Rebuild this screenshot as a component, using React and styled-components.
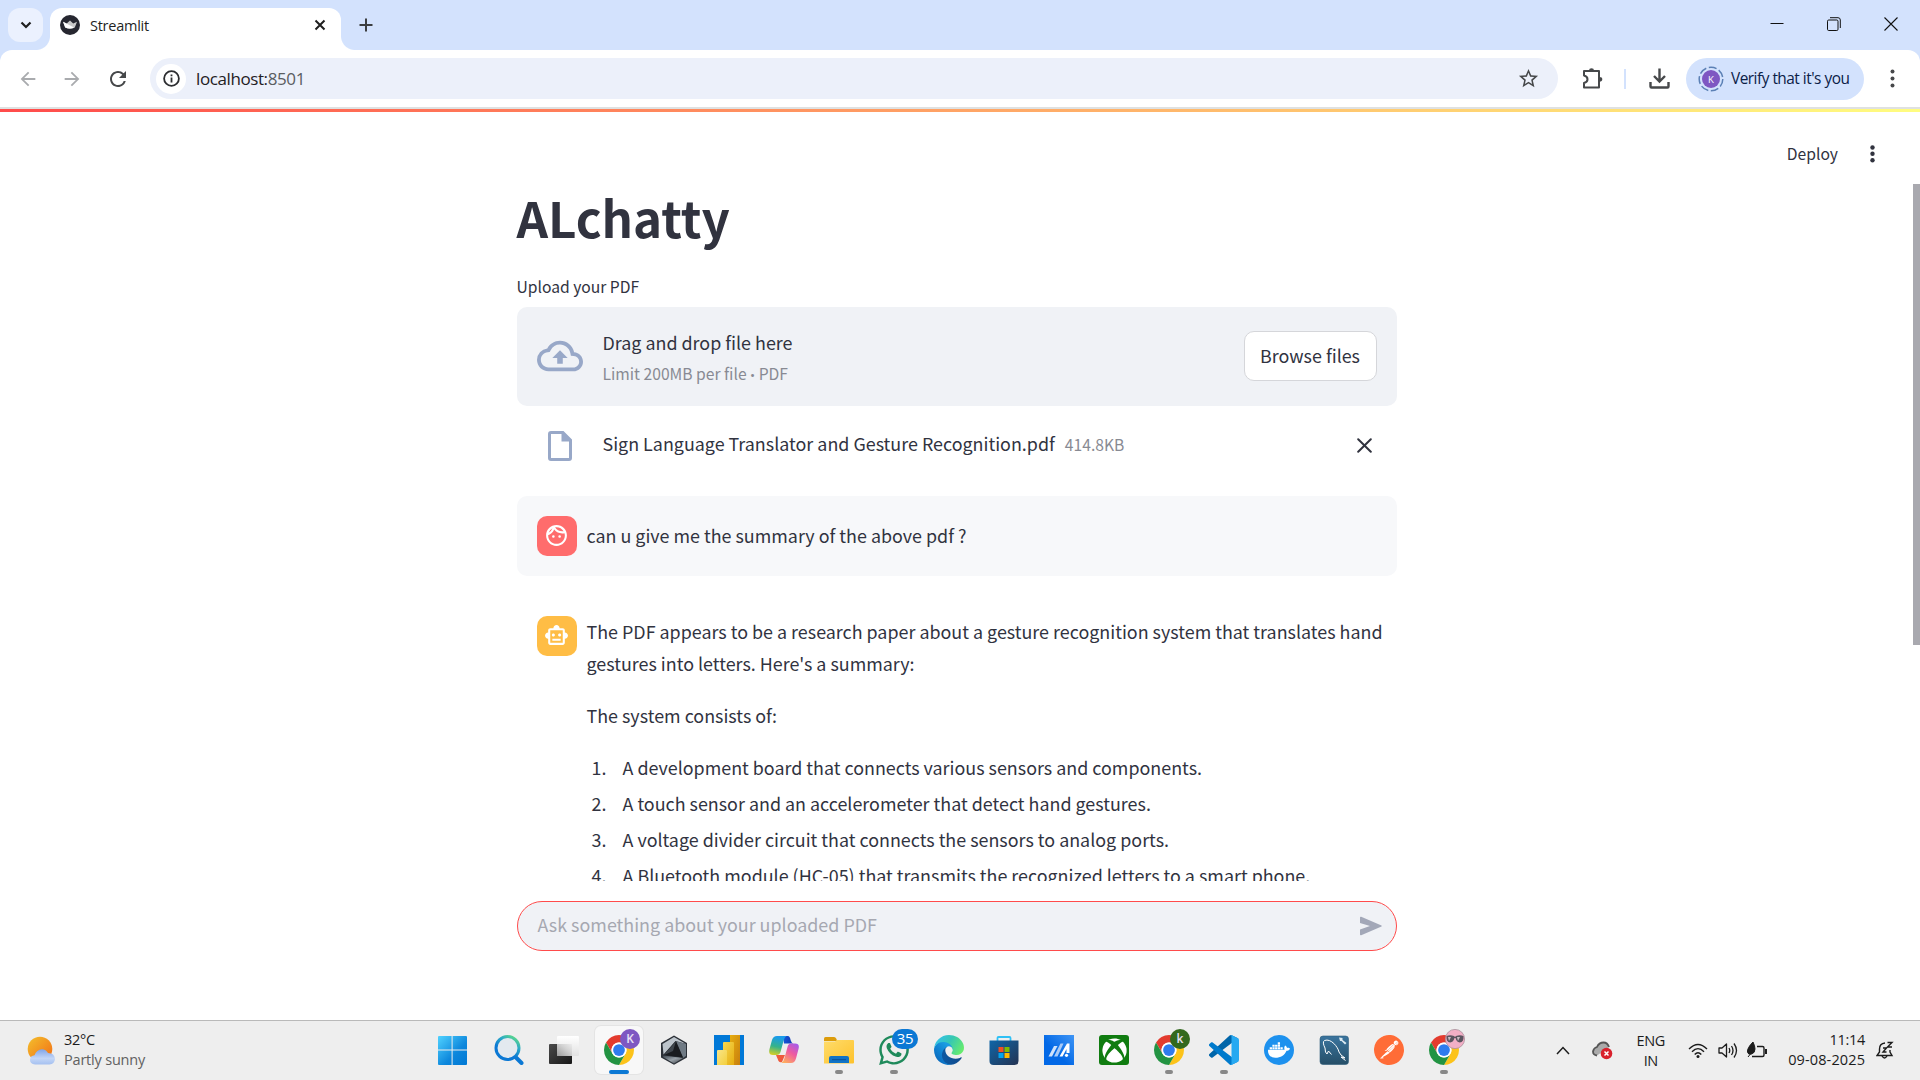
import React from "react";
import styled, { createGlobalStyle, css } from "styled-components";
import { MdArrowBack, MdArrowForward, MdRefresh, MdStarBorder, MdOutlineCloudUpload, MdOutlineFace, MdOutlineSmartToy } from "react-icons/md";
import { FaWhatsapp, FaXbox, FaDocker } from "react-icons/fa";
import { SiPostman } from "react-icons/si";

const Global = createGlobalStyle`
  *, *::before, *::after { box-sizing: border-box; }
  body { margin: 0; background: #fff; overflow: hidden; }
  svg { display: block; flex: none; }
  h1, p, ol { margin: 0; padding: 0; }
`;

const ui = css`font-family: "Open Sans", "Noto Sans", sans-serif; white-space: nowrap;`;
const source = css`font-family: "Noto Sans CJK SC", "Noto Sans", sans-serif; color: #31333f;`;

const Screen = styled.div`
  width: 1920px; height: 1080px; display: grid;
  grid-template-rows: 50px 59px 911px 60px; overflow: hidden; background: #fff;
`;

/* ---------- browser frame ---------- */
const TabStrip = styled.header`
  background: #d3e2fd; display: flex; align-items: flex-start; padding: 8px 0 0 8px;
`;
const TabSearch = styled.button`
  width: 35px; height: 34px; border: 0; padding: 0; border-radius: 12px; background: #ebf1fe;
  display: grid; place-items: center; margin-right: 7px;
`;
const Tab = styled.div`
  position: relative; width: 291px; height: 42px; background: #fff; border-radius: 12px 12px 0 0;
  display: flex; align-items: center; padding: 0 15px 8px 10px;
  &::before, &::after { content: ""; position: absolute; bottom: 0; width: 14px; height: 14px; }
  &::before { left: -14px; background: radial-gradient(circle at 0 0, transparent 13.5px, #fff 14.5px); }
  &::after { right: -14px; background: radial-gradient(circle at 100% 0, transparent 13.5px, #fff 14.5px); }
`;
const TabTitle = styled.span`
  ${ui} font-size: 14.5px; letter-spacing: -0.25px; color: #1f1f1f; margin-left: 10px; flex: 1; line-height: 20px; padding-top: 1px;
`;
const NewTab = styled.div`margin: 10px 0 0 18px;`;
const WindowButtons = styled.div`
  margin-left: auto; display: flex; padding: 9px 22px 0 0; gap: 43px; align-items: center;
`;
const Toolbar = styled.div`
  background: linear-gradient(#d3e2fd, #d3e2fd) top / 100% 12px no-repeat;
  display: flex; flex-direction: column;
`;
const ToolbarRow = styled.div`
  height: 57px; background: #fff; border-radius: 12px 12px 0 0; display: flex; align-items: center;
  padding: 0 18px 0 16.5px;
`;
const ToolbarEdge = styled.div`height: 2px; background: #dfe1e1;`;
const NavButtons = styled.div`display: flex; width: 133.5px; gap: 22.5px; color: #a9abae; align-items: center;`;
const Dark = styled.span`color: #46484a; display: block;`;
const Omnibox = styled.div`
  width: 1408px; height: 41px; border-radius: 21px; background: #ecf0fa; display: flex; align-items: center; padding: 0 18px 0 6px;
`;
const SiteInfo = styled.div`width: 30px; height: 30px; border-radius: 50%; background: #fff; display: grid; place-items: center;`;
const Url = styled.span`
  ${ui} font-size: 17px; letter-spacing: -0.4px; color: #1f2023; margin-left: 10px; flex: 1; line-height: 24px; padding-top: 1px;
  b { font-weight: 400; color: #5a5d61; }
`;
const ToolDivider = styled.div`width: 2px; height: 20px; background: #d3e2fd; margin: 0 23px 0 21px;`;
const Profile = styled.div`
  width: 178px; height: 42px; border-radius: 21px; background: #d3e2fd; display: flex; align-items: center; padding-left: 12px; margin: 0 26px 0 16px;
`;
const ProfileText = styled.span`${ui} font-size: 15.4px; letter-spacing: -0.5px; color: #0a2047; margin-left: 7px;`;

/* ---------- app ---------- */
const Viewport = styled.div`display: flex; flex-direction: column;`;
const Rainbow = styled.div`height: 3px; background: linear-gradient(90deg, #ff4b4b, #fffd80);`;
const AppHeader = styled.div`
  height: 72px; display: flex; justify-content: flex-end; align-items: center; padding: 12px 45px 0 0; gap: 32px;
`;
const Deploy = styled.span`${source} font-size: 15.67px; line-height: 28px; margin-top: -1px;`;
const ScrollRow = styled.div`height: 697px; display: flex; overflow: hidden;`;
const ScrollArea = styled.main`flex: 1; display: flex; justify-content: center;`;
const ScrollTrack = styled.div`width: 7px;`;
const ScrollThumb = styled.div`height: 461px; background: #a9a9af;`;
const Column = styled.div`width: 880px; flex: none;`;
const Title = styled.h1`${source} font-size: 49.25px; line-height: 66px; font-weight: 700; letter-spacing: -0.05px;`;
const Label = styled.div`${source} font-size: 15.67px; line-height: 28px; margin: 23px 0 6px;`;
const Dropzone = styled.section`
  height: 99px; border-radius: 10px; background: #f0f2f6; display: flex; align-items: center; padding: 0 20px; gap: 20px; color: #98a8c8;
  > svg { margin-bottom: 2px; }
`;
const DropText = styled.div`display: flex; flex-direction: column; gap: 2px; flex: 1; padding-top: 1px;`;
const Body = styled.div`${source} font-size: 17.9px; line-height: 32px;`;
const Small = styled.div`${source} font-size: 15.67px; line-height: 28px; color: #888a93;`;
const Bullet = styled.span`font-family: "Open Sans", sans-serif; font-size: 13.5px; line-height: 1;`;
const Browse = styled.button`
  ${source} font-size: 17.9px; width: 133px; height: 50px; padding: 0 0 2px; border: 1px solid #d5d6da; border-radius: 10px; background: #fff;
  margin-bottom: 1px;
`;
const FileRow = styled.div`height: 90px; display: flex; align-items: flex-start; padding: 21px 25px 0 31px;`;
const FileIcon = styled.div`width: 55px; padding-top: 4px;`;
const FileSize = styled(Small)`margin: 4px 0 0 10px; flex: 1;`;
const Clear = styled.div`padding-top: 11px;`;
const Message = styled.article`
  display: flex; gap: 10px; padding: 20px; border-radius: 10px; background: ${p => (p.$user ? "#f7f8fa" : "transparent")};
  margin-bottom: 20px;
`;
const Avatar = styled.div`
  width: 40px; height: 40px; flex: none; border-radius: 10px; display: grid; place-items: center; color: #fff; background: ${p => p.$color};
  padding: 0 1px 2px 0;
`;
const Markdown = styled.div`
  ${source} font-size: 17.9px; line-height: 32px; margin-top: ${p => p.$top}px; white-space: nowrap;
`;
const Paragraph = styled.p`& + &, & + ol { margin-top: 20px; }`;
const List = styled.ol`list-style: none;`;
const Item = styled.li`display: flex; height: 36px; padding-left: 5px;`;
const Num = styled.span`width: 31px;`;
const Bottom = styled.div`height: 139px; padding: 20px 0 0; display: flex; justify-content: center;`;
const ChatInput = styled.div`
  width: 880px; height: 50px; margin-right: 6px; border: 1px solid #ff4b4b; border-radius: 25px; background: #f0f2f6; display: flex; align-items: center;
  justify-content: space-between; padding: 0 14px 0 20px;
`;
const Placeholder = styled(Body)`color: #a6a8b1; margin: -4px 0 0 -0.5px;`;

/* ---------- taskbar ---------- */
const Taskbar = styled.footer`
  border-top: 1px solid #b9b9b9; background: #eee; display: grid; grid-template-columns: 425px 1045px 1fr; ${ui}
`;
const Weather = styled.div`display: flex; align-items: center; padding-left: 27px; gap: 6px;`;
const Stack = styled.div`
  display: flex; flex-direction: column; align-items: ${p => p.$align || "flex-start"}; font-size: 14.5px; line-height: 20px; letter-spacing: -0.3px; color: #1c1c1c;
  margin-top: ${p => p.$top || 0}px;
`;
const Muted = styled.span`color: #616161; letter-spacing: -0.2px;`;
const DateText = styled.span`letter-spacing: 0.13px;`;
const Apps = styled.div`display: grid; grid-template-columns: 57px repeat(18, 55px);`;
const AppCell = styled.div`
  width: 48px; height: 48px; margin: 5px 0 0 3px; border-radius: 6px; display: flex; flex-direction: column; align-items: center; padding-top: 9px;
  position: relative;
  ${p => p.$active && css`background: #f8f8f8; box-shadow: 0 0 0 1px #e4e4e4;`}
`;
const Indicator = styled.i`
  width: ${p => (p.$active ? 20 : 8)}px; height: 4px; border-radius: 2px; background: ${p => (p.$active ? "#0b78d4" : "#888")}; margin-top: 5px;
`;
const Badge = styled.span`
  position: absolute; left: 25px; top: 3px; width: 20px; height: 20px; border-radius: 50%; background: ${p => p.$bg}; color: #e8e0f5;
  font-size: 12px; font-weight: 600; line-height: 19px; text-align: center;
`;
const Count = styled(Badge)`left: 22px; width: 26px; border-radius: 10px; color: #fff; font-size: 15px; font-weight: 400; letter-spacing: -0.3px;`;
const Plate = styled.div`width: 30px; height: 30px; border-radius: ${p => p.$r}; background: ${p => p.$bg}; color: #fff; display: grid; place-items: center;`;
const WhatsAppGlyph = styled(FaWhatsapp)`margin: -2px; color: #1f8a5b;`;
const Tray = styled.div`display: flex; align-items: center; padding: 0 25px 0 86px;`;
const Gap = styled.span`width: ${p => p.$w}px; flex: none;`;

const Chrome = () => (
  <svg width="30" height="30" viewBox="0 0 48 48">
    <path fill="#e33b2e" d="M3.22 12A24 24 0 0 1 44.78 12L24 12A12 12 0 0 0 13.6 30Z" />
    <path fill="#fcc31a" d="M44.78 12A24 24 0 0 1 24 48L34.4 30A12 12 0 0 0 24 12Z" />
    <path fill="#229342" d="M24 48A24 24 0 0 1 3.22 12L13.6 30A12 12 0 0 0 34.4 30Z" />
    <circle cx="24" cy="24" r="12" fill="#fff" /><circle cx="24" cy="24" r="9.4" fill="#2f7bee" />
  </svg>
);
const Windows = () => (
  <svg width="30" height="30" viewBox="0 0 30 30">
    <defs><linearGradient id="win" x1="0" y1="0" x2="1" y2="1"><stop offset="0" stopColor="#50d2ff" /><stop offset=".6" stopColor="#0d87dc" /><stop offset="1" stopColor="#0078d4" /></linearGradient></defs>
    <path fill="url(#win)" d="M2 1H14.6V14.6H1V2A1 1 0 0 1 2 1ZM15.6 1H29A1 1 0 0 1 30 2V14.6H15.6ZM1 15.6H14.6V30H2A1 1 0 0 1 1 29ZM15.6 15.6H30V29A1 1 0 0 1 29 30H15.6Z" />
  </svg>
);
const Search = () => (
  <svg width="30" height="30" viewBox="0 0 30 30">
    <defs><linearGradient id="sr" x1=".2" y1="1" x2=".8" y2="0"><stop offset=".35" stopColor="#0b78d4" /><stop offset=".7" stopColor="#2aa8c8" /><stop offset="1" stopColor="#5bd88a" /></linearGradient></defs>
    <path d="M20.5 21L27.500 28" stroke="#0b78d4" strokeWidth="4" strokeLinecap="round" />
    <circle cx="13.5" cy="13" r="11.5" fill="#e3e9ef" stroke="url(#sr)" strokeWidth="3" />
  </svg>
);
const TaskView = () => (
  <svg width="30" height="30" viewBox="0 0 30 30">
    <defs>
      <linearGradient id="tv" x1="0" y1="0" x2="1" y2="1"><stop offset="0" stopColor="#4a4a4a" /><stop offset="1" stopColor="#171717" /></linearGradient>
      <linearGradient id="tv2" x1="0" y1="1" x2="1" y2="0"><stop offset="0" stopColor="#9c9c9c" /><stop offset=".6" stopColor="#d2d2d2" /><stop offset="1" stopColor="#ececec" /></linearGradient>
      <linearGradient id="tv3" x1="0" y1="0" x2="0" y2="1"><stop offset="0" stopColor="#fff" /><stop offset="1" stopColor="#e2e2e2" /></linearGradient>
    </defs>
    <rect x="0" y="9" width="23" height="20" rx="1" fill="url(#tv)" />
    <rect x="8" y="1" width="22" height="20" rx="1" fill="url(#tv3)" /><rect x="8" y="9" width="15" height="12" fill="url(#tv2)" />
  </svg>
);
const Cursor = () => (
  <svg width="30" height="30" viewBox="0 0 30 30">
    <defs><linearGradient id="cu" x1="0" y1="0" x2="1" y2="1"><stop offset="0" stopColor="#39434d" /><stop offset=".5" stopColor="#9aa3aa" /><stop offset="1" stopColor="#34383c" /></linearGradient></defs>
    <path d="M15 .5L28 8V22.5L15 29.8L2 22.5V8Z" fill="#2b3037" />
    <path d="M15 2L26.5 8.7L16.5 6L4.5 19.5L3.5 9Z" fill="#bcc4cb" />
    <path d="M16.5 6L27 9V21L24 23Z" fill="#6f7a84" /><path d="M4.5 20.5L24 23L15 28.5L4 22Z" fill="url(#cu)" />
    <path d="M17 6L24 22.5L5 20Z" fill="#191c20" /><path d="M17 6L14 16L5 20Z" fill="#40474e" />
  </svg>
);
const PowerBI = () => (
  <svg width="30" height="30" viewBox="0 0 30 30">
    <defs>
      <linearGradient id="pb" x1="0" y1="0" x2="1" y2="1"><stop offset="0" stopColor="#e6ad10" /><stop offset="1" stopColor="#c87e0e" /></linearGradient>
      <linearGradient id="pb2" x1="0" y1="0" x2="1" y2="1"><stop offset="0" stopColor="#f6d751" /><stop offset="1" stopColor="#e6ad10" /></linearGradient>
      <linearGradient id="pb3" x1="0" y1="0" x2="1" y2="1"><stop offset="0" stopColor="#f9e589" /><stop offset="1" stopColor="#f3cf3b" /></linearGradient>
    </defs>
    <path fill="#0078d7" d="M0 0H30V30H0Z" /><path fill="url(#pb)" d="M16 0H26V30H16Z" /><path fill="url(#pb2)" d="M9 8Q9 7 10 7H19Q20 7 20 8V30H9Z" /><path fill="url(#pb3)" d="M3 16Q3 15 4 15H12Q13 15 13 16V30H3Z" />
  </svg>
);
const Copilot = () => (
  <svg width="30" height="30" viewBox="0 0 30 30">
    <defs>
      <linearGradient id="ca" x1=".2" y1="0" x2="0" y2="1"><stop offset="0" stopColor="#1a9bea" /><stop offset=".5" stopColor="#35b38a" /><stop offset="1" stopColor="#e8d21a" /></linearGradient>
      <linearGradient id="cb" x1=".8" y1="0" x2=".2" y2="1"><stop offset="0" stopColor="#a85ae8" /><stop offset=".45" stopColor="#ee5aa0" /><stop offset="1" stopColor="#ffae5e" /></linearGradient>
      <linearGradient id="cc" x1="0" y1="0" x2="1" y2="0"><stop offset="0" stopColor="#1558d8" /><stop offset="1" stopColor="#1238b4" /></linearGradient>
    </defs>
    <path fill="url(#cc)" d="M14 1H18C21 1 21 3 22 6Q22.500 8 24.500 8.500H15Z" />
    <path fill="#ee5a3c" d="M7 20H16L13 27Q11 28 9.500 26Z" />
    <path fill="url(#ca)" d="M8 1H17.500Q15.500 2 14.500 6L11.500 17Q10.700 20 7.500 20H4Q-1 20 .5 14L3 5Q4.300 1 8 1Z" />
    <path fill="url(#cb)" d="M22 8.500H26Q31 8.500 29.500 14L27 23.500Q25.700 28 22 28H12.500Q14.500 27 15.500 23L18.500 12Q19.200 8.500 22 8.500Z" />
  </svg>
);
const Folder = () => (
  <svg width="30" height="30" viewBox="0 0 30 30">
    <defs><linearGradient id="fo" x1="0" y1="0" x2="1" y2="1"><stop offset="0" stopColor="#ffdc6b" /><stop offset="1" stopColor="#fdc22c" /></linearGradient></defs>
    <path fill="#dc9c0b" d="M0 3.500Q0 2 1.500 2H10Q11.500 2 12.500 4L13 6H0Z" /><path fill="url(#fo)" d="M0 6.500H11L13 5H29Q30 5 30 6V27.500Q30 28.500 29 28.500H0Z" />
    <path fill="#1173c6" d="M5 28V23Q5 21 7 21H23Q25 21 25 23V28Z" /><path fill="#0a4f96" d="M8 24.200H22V25.200H8Z" />
  </svg>
);
const Edge = () => (
  <svg width="30" height="30" viewBox="0 0 256 256">
    <defs>
      <linearGradient id="e1" x1="0" y1=".7" x2="1" y2=".7"><stop offset="0" stopColor="#0c59a4" /><stop offset="1" stopColor="#114a8b" /></linearGradient>
      <linearGradient id="e2" x1=".8" y1=".3" x2=".2" y2="1"><stop offset="0" stopColor="#1b9de2" /><stop offset=".5" stopColor="#0f80d0" /><stop offset="1" stopColor="#0a64b8" /></linearGradient>
      <linearGradient id="e3" x1="0" y1=".2" x2="1" y2=".6"><stop offset="0" stopColor="#35c1f1" /><stop offset=".5" stopColor="#36c7b4" /><stop offset="1" stopColor="#66eb6e" /></linearGradient>
    </defs>
    <path fill="url(#e1)" d="M231 190.500c-3.400 1.800-6.900 3.400-10.500 4.700a101.500 101.500 0 0 1-35.900 6.500c-47.300 0-88.500-32.500-88.500-74.300a31.500 31.500 0 0 1 16.400-27.300c-42.800 1.800-53.800 46.400-53.800 72.500 0 74 68.100 81.400 82.800 81.400 7.900 0 19.800-2.300 27-4.600l1.300-.4a128.300 128.300 0 0 0 66.600-52.800 4 4 0 0 0-5.400-5.700Z" />
    <path fill="url(#e2)" d="M105.700 241.400A79.200 79.200 0 0 1 83 220.100a80.700 80.700 0 0 1 29.500-120c3.200-1.500 8.500-4.100 15.600-4a32.400 32.400 0 0 1 25.700 13 31.900 31.900 0 0 1 6.300 18.700c0-.2 24.500-79.600-80-79.600-43.900 0-80 41.700-80 78.200a130.200 130.200 0 0 0 12.100 56 128 128 0 0 0 156.400 67 75.500 75.500 0 0 1-62.800-8Z" />
    <path fill="url(#e3)" d="M152.300 148.900c-.9 1-3.400 2.500-3.400 5.600 0 2.600 1.700 5.200 4.800 7.300 14.300 10 41.400 8.600 41.500 8.600a59.600 59.600 0 0 0 30.300-8.300 61.400 61.400 0 0 0 30.400-52.900c.3-22.400-8-37.300-11.300-43.900C223.500 23.900 177.700 0 128 0A128 128 0 0 0 0 126.200c.5-36.500 36.800-66 80-66 3.500 0 23.500.3 42 10.100 16.300 8.600 24.900 19 30.800 29.200 6.200 10.700 7.300 24.100 7.300 29.500 0 5.300-2.700 13.300-7.800 19.900Z" />
  </svg>
);
const Store = () => (
  <svg width="30" height="30" viewBox="0 0 30 30">
    <defs><linearGradient id="st" x1="0" y1="0" x2="1" y2="1"><stop offset="0" stopColor="#0f66a8" /><stop offset="1" stopColor="#243352" /></linearGradient></defs>
    <path d="M8.500 7V3Q8.500 2 9.500 2H20.500Q21.500 2 21.500 3V7" fill="none" stroke="#2fc0f5" strokeWidth="1.800" />
    <path fill="url(#st)" d="M.5 5.500H29.500V26Q29.500 30 25.500 30H4.500Q.5 30 .5 26Z" />
    <path fill="#f25022" d="M9.500 12H14.500V17H9.500Z" /><path fill="#7fba00" d="M15.500 12H20.500V17H15.500Z" /><path fill="#00a4ef" d="M9.500 18H14.500V23H9.500Z" /><path fill="#ffb900" d="M15.500 18H20.500V23H15.500Z" />
  </svg>
);
const Asus = () => (
  <svg width="30" height="30" viewBox="0 0 30 30">
    <defs><linearGradient id="as" x1=".4" y1=".6" x2="1" y2="0"><stop offset="0" stopColor="#0268e6" /><stop offset="1" stopColor="#3f95f5" /></linearGradient></defs>
    <path fill="url(#as)" d="M0 0H30V30H0Z" />
    <path d="M4.500 21.500H8L13.500 11H10Z" fill="#cfe2fb" /><path d="M10 21.500H13.500L19.500 8.500H16.500Z" fill="#a9cbf8" />
    <path d="M15.500 21.500L23 8.500H25.500V18H22.500V14L18.500 21.500Z" fill="#fff" /><circle cx="22.500" cy="20.300" r="1.600" fill="#fff" />
  </svg>
);
const VSCode = () => (
  <svg width="30" height="30" viewBox="0 0 100 100">
    <path fill="#0065A9" d="M96.460 10.800L75.860.880C73.470-.270 70.620.210 68.750 2.080L1.300 63.580C-.520 65.240-.510 68.090 1.300 69.750L6.810 74.750C8.300 76.100 10.530 76.200 12.130 74.990L93.360 13.370C96.090 11.300 100 13.250 100 16.670V16.430C100 14.030 98.620 11.840 96.460 10.800Z" />
    <path fill="#007ACC" d="M96.460 89.200L75.860 99.120C73.470 100.270 70.620 99.790 68.750 97.920L1.300 36.420C-.520 34.760-.510 31.910 1.300 30.250L6.810 25.250C8.300 23.900 10.530 23.800 12.130 25.010L93.360 86.630C96.090 88.700 100 86.750 100 83.330V83.570C100 85.970 98.620 88.160 96.460 89.200Z" />
    <path fill="#27a9f1" d="M75.860 99.130C73.470 100.270 70.620 99.790 68.750 97.920C71.060 100.220 75 98.590 75 95.330V4.670C75 1.410 71.060-.220 68.750 2.080C70.620.210 73.470-.270 75.860.870L96.460 10.780C98.620 11.820 100 14.010 100 16.410V83.590C100 85.990 98.620 88.180 96.460 89.220Z" />
  </svg>
);
const MySQL = () => (
  <svg width="30" height="30" viewBox="0 0 30 30">
    <defs><linearGradient id="my" x1="0" y1="0" x2="0" y2="1"><stop offset="0" stopColor="#3a749e" /><stop offset="1" stopColor="#264f68" /></linearGradient></defs>
    <rect x="1" y="1" width="28.500" height="28.500" rx="3" fill="url(#my)" stroke="#2b5a78" strokeWidth=".6" />
    <g fill="none" stroke="#fff" strokeWidth="1" strokeLinejoin="round">
      <path d="M8 19Q6 18 6 13Q3 7 5.500 5.500C12 3 19 12 20 17Q21 20 26 23L22 22L26.500 25.500" /><path d="M8 19L9.500 16L12.500 19.500" />
    </g>
    <path fill="#dceaf2" d="M20 2.500L23.500 3V5L27.500 8L26 9.500L22.500 6H21Z" />
  </svg>
);
const Sunglasses = () => (
  <svg width="20" height="20" viewBox="0 0 20 20">
    <circle cx="10" cy="10" r="9.600" fill="#f2afc6" stroke="#a9909a" strokeWidth=".8" />
    <path fill="#5b5560" d="M1.500 7Q5 5.500 9 7L10 8L11 7Q15 5.500 18.500 7Q19 13 14.800 13.500Q11.500 13 10.500 9H9.500Q8.500 13 5.200 13.500Q1 13 1.500 7Z" /><path fill="#c9bcc4" d="M3 8H6L4 12ZM12 8H15L13 12Z" />
  </svg>
);
const PartlySunny = () => (
  <svg width="31" height="30" viewBox="0 0 31 30">
    <defs>
      <linearGradient id="su" x1="0" y1="0" x2="1" y2="1"><stop offset="0" stopColor="#f3c02d" /><stop offset="1" stopColor="#f26b14" /></linearGradient>
      <linearGradient id="cl" x1="0" y1="0" x2="0" y2="1"><stop offset="0" stopColor="#7fa4e8" /><stop offset=".6" stopColor="#c3d6f7" /><stop offset="1" stopColor="#a5c0f0" /></linearGradient>
    </defs>
    <circle cx="13" cy="13" r="12.300" fill="url(#su)" />
    <path fill="url(#cl)" d="M8 28.500Q3 28 3 23.700Q3.300 19.500 7.500 19.200Q9.500 13.500 15 13.200Q19 13.300 21 17Q27.500 17 28 23Q27.500 28.300 22.500 28.500Z" />
  </svg>
);

const APPS = [
  { icon: <Windows /> }, { icon: <Search /> }, { icon: <TaskView /> },
  { icon: <Chrome />, active: true, badge: <Badge $bg="#7e57c2">K</Badge> },
  { icon: <Cursor /> }, { icon: <PowerBI /> }, { icon: <Copilot /> },
  { icon: <Folder />, run: true },
  { icon: <WhatsAppGlyph size={34} />, run: true, badge: <Count $bg="#0b78d4">35</Count> },
  { icon: <Edge /> }, { icon: <Store /> }, { icon: <Asus /> },
  { icon: <Plate $r="3px" $bg="#107c10"><FaXbox size={25} /></Plate> },
  { icon: <Chrome />, run: true, badge: <Badge $bg="#33691e">k</Badge> },
  { icon: <VSCode />, run: true },
  { icon: <Plate $r="50%" $bg="#1d91ee"><FaDocker size={22} /></Plate> },
  { icon: <MySQL /> },
  { icon: <Plate $r="50%" $bg="#fff"><SiPostman size={30} color="#ff6c37" /></Plate> },
  { icon: <Chrome />, run: true, badge: <Badge $bg="none"><Sunglasses /></Badge> },
];
const ITEMS = [
  "A development board that connects various sensors and components.",
  "A touch sensor and an accelerometer that detect hand gestures.",
  "A voltage divider circuit that connects the sensors to analog ports.",
  "A Bluetooth module (HC-05) that transmits the recognized letters to a smart phone.",
];

export default function App() {
  return (
    <Screen>
      <Global />
      <TabStrip>
        <TabSearch><svg width="12" height="8" viewBox="0 0 12 8"><path d="M1.500 1.500L6 6L10.500 1.500" fill="none" stroke="#1f1f1f" strokeWidth="2.200" /></svg></TabSearch>
        <Tab>
          <svg width="20" height="20" viewBox="0 0 20 20"><circle cx="10" cy="10" r="10" fill="#262730" /><path fill="#c9c9c9" d="M3 6.800L6.700 8.500L10 5.500L13.200 8.500L17 6.800L14.800 12.500Q10 15 5.200 12.500Z" /><path fill="#fff" d="M3 6.800L14 12.500Q10 14.500 5.200 12.500Z" /></svg>
          <TabTitle>Streamlit</TabTitle>
          <svg width="12" height="12" viewBox="0 0 12 12"><path d="M1.500 1.500L10.500 10.500M10.500 1.500L1.500 10.500" stroke="#1f1f1f" strokeWidth="2" /></svg>
        </Tab>
        <NewTab><svg width="14" height="14" viewBox="0 0 14 14"><path d="M7 .5V13.500M.5 7H13.500" stroke="#3c3e41" strokeWidth="2" /></svg></NewTab>
        <WindowButtons>
          <svg width="14" height="14" viewBox="0 0 14 14"><path d="M.5 6.500H13.500" stroke="#111" strokeWidth="1" /></svg>
          <svg width="14" height="14" viewBox="0 0 14 14"><rect x=".5" y="3" width="10.500" height="10.500" rx="1.200" fill="none" stroke="#111" /><path d="M3 .7H11Q13.300 .7 13.300 3V11" fill="none" stroke="#111" /></svg>
          <svg width="14" height="14" viewBox="0 0 14 14"><path d="M.5 .5L13.500 13.500M13.500 .5L.5 13.500" stroke="#111" strokeWidth="1.100" /></svg>
        </WindowButtons>
      </TabStrip>
      <Toolbar>
        <ToolbarRow>
          <NavButtons><MdArrowBack size={22} /><MdArrowForward size={22} /><Dark><MdRefresh size={24} /></Dark></NavButtons>
          <Omnibox>
            <SiteInfo><svg width="17" height="17" viewBox="0 0 17 17"><circle cx="8.500" cy="8.500" r="7.400" fill="none" stroke="#2c2d30" strokeWidth="1.800" /><path d="M8.500 7.500V12.500M8.500 4.500V6.300" stroke="#2c2d30" strokeWidth="1.800" /></svg></SiteInfo>
            <Url>localhost:<b>8501</b></Url>
            <Dark><MdStarBorder size={23} /></Dark>
          </Omnibox>
          <Gap $w={24} />
          <svg width="21" height="22" viewBox="0 0 21 22"><path d="M2 3H17V19.500H2V15Q5.500 14 5.500 11.200Q5.500 8.500 2 7.500Z" fill="none" stroke="#46484a" strokeWidth="2" strokeLinejoin="round" /><path d="M7 2.500Q7 .3 9.500 .3Q12 .3 12 2.500ZM17.500 9Q20.300 9 20.300 11.300Q20.300 13.700 17.500 13.700Z" fill="#46484a" /></svg>
          <ToolDivider />
          <svg width="21" height="21" viewBox="0 0 21 21"><path d="M10.500 .5V13M5 8L10.500 13.500L16 8" fill="none" stroke="#46484a" strokeWidth="2.400" /><path d="M1.500 14V18.500Q1.500 19.500 2.500 19.500H18.500Q19.500 19.500 19.500 18.500V14" fill="none" stroke="#46484a" strokeWidth="2.400" /></svg>
          <Profile>
            <svg width="26" height="26" viewBox="0 0 26 26"><circle cx="13" cy="13" r="11.800" fill="none" stroke="#5b80b5" strokeWidth="1.500" strokeDasharray="8 2.600" /><circle cx="13" cy="13" r="9" fill="#7e57c2" /><text x="13" y="16.500" fontFamily="Open Sans" fontSize="9.500" fill="#fff" textAnchor="middle">K</text></svg>
            <ProfileText>Verify that it's you</ProfileText>
          </Profile>
          <svg width="5" height="19" viewBox="0 0 5 19" fill="#46484a"><circle cx="2.500" cy="2.500" r="2" /><circle cx="2.500" cy="9.500" r="2" /><circle cx="2.500" cy="16.500" r="2" /></svg>
        </ToolbarRow>
        <ToolbarEdge />
      </Toolbar>
      <Viewport>
        <Rainbow />
        <AppHeader>
          <Deploy>Deploy</Deploy>
          <svg width="5" height="18" viewBox="0 0 5 18" fill="#31333f"><circle cx="2.500" cy="2.500" r="2.200" /><circle cx="2.500" cy="8.800" r="2.200" /><circle cx="2.500" cy="15.200" r="2.200" /></svg>
        </AppHeader>
        <ScrollRow>
          <ScrollArea>
            <Column>
              <Title>ALchatty</Title>
              <Label>Upload your PDF</Label>
              <Dropzone>
                <MdOutlineCloudUpload size={46} />
                <DropText><Body>Drag and drop file here</Body><Small>Limit 200MB per file <Bullet>•</Bullet> PDF</Small></DropText>
                <Browse>Browse files</Browse>
              </Dropzone>
              <FileRow>
                <FileIcon><svg width="24" height="30" viewBox="0 0 24 30"><path fill="#98a8c8" fillRule="evenodd" d="M3 0H15.500L24 8.500V27Q24 30 21 30H3Q0 30 0 27V3Q0 0 3 0ZM3 3V27H21V10.500H13.500V3Z" /></svg></FileIcon>
                <Body>Sign Language Translator and Gesture Recognition.pdf</Body>
                <FileSize>414.8KB</FileSize>
                <Clear><svg width="15" height="15" viewBox="0 0 15 15"><path d="M1.200 1.200L13.800 13.800M13.800 1.200L1.200 13.800" stroke="#31333f" strokeWidth="2" strokeLinecap="round" /></svg></Clear>
              </FileRow>
              <Message $user>
                <Avatar $color="#ff6c6c"><MdOutlineFace size={25} /></Avatar>
                <Markdown $top={3}><Paragraph>can u give me the summary of the above pdf ?</Paragraph></Markdown>
              </Message>
              <Message>
                <Avatar $color="#ffbd45"><MdOutlineSmartToy size={25} /></Avatar>
                <Markdown $top={-1}>
                  <Paragraph>The PDF appears to be a research paper about a gesture recognition system that translates hand<br />gestures into letters. Here's a summary:</Paragraph>
                  <Paragraph>The system consists of:</Paragraph>
                  <List>{ITEMS.map((t, i) => <Item key={t}><Num>{`${i + 1}.`}</Num><span>{t}</span></Item>)}</List>
                </Markdown>
              </Message>
            </Column>
          </ScrollArea>
          <ScrollTrack><ScrollThumb /></ScrollTrack>
        </ScrollRow>
        <Bottom>
          <ChatInput>
            <Placeholder>Ask something about your uploaded PDF</Placeholder>
            <svg width="22" height="20" viewBox="0 0 22 20"><path fill="#a3a8b8" d="M0 1.500Q0 .3 1.200 .8L21.500 9.500Q22 10 21.500 10.500L1.200 19.200Q0 19.600 0 18.500V13.500L10 10L0 7Z" /></svg>
          </ChatInput>
        </Bottom>
      </Viewport>
      <Taskbar>
        <Weather><PartlySunny /><Stack $top={-2}><span>32°C</span><Muted>Partly sunny</Muted></Stack></Weather>
        <Apps>
          {APPS.map((a, i) => (
            <AppCell key={i} $active={a.active}>{a.icon}{a.badge}{(a.active || a.run) && <Indicator $active={a.active} />}</AppCell>
          ))}
        </Apps>
        <Tray>
          <svg width="14" height="9" viewBox="0 0 14 9"><path d="M1 8L7 1.500L13 8" fill="none" stroke="#1c1c1c" strokeWidth="1.500" /></svg>
          <Gap $w={22} />
          <svg width="21" height="19" viewBox="0 0 21 19"><path d="M5 14.500Q1 14 1 10.500Q1.500 7 5 6Q7 1.500 11.500 1.500Q15.500 1.500 17 6" fill="#aaa" stroke="#555" strokeWidth="1.800" /><circle cx="14.500" cy="12.500" r="5.800" fill="#d9212c" /><path d="M12.500 10.500L16.500 14.500M16.500 10.500L12.500 14.500" stroke="#fff" strokeWidth="1.500" /></svg>
          <Gap $w={23.5} />
          <Stack $align="center"><span>ENG</span><span>IN</span></Stack>
          <Gap $w={22.5} />
          <svg width="20" height="16" viewBox="0 0 20 16" fill="none" stroke="#1c1c1c" strokeWidth="1.400"><path d="M1 6Q10-3 19 6M4 8.800Q10 2.500 16 8.800M6.700 11.500Q10 8 13.300 11.500" /><circle cx="10" cy="13.500" r="1.500" fill="#1c1c1c" stroke="none" /></svg>
          <Gap $w={10} />
          <svg width="20" height="17" viewBox="0 0 20 17" fill="none" stroke="#1c1c1c" strokeWidth="1.300"><path d="M1 6H4L8.500 2V15L4 11H1Z" strokeLinejoin="round" /><path d="M11 6Q12.500 8.500 11 11M13.500 4Q16.500 8.500 13.500 13M16 1.500Q21 8.500 16 15.500" /></svg>
          <Gap $w={9.5} />
          <svg width="20" height="17" viewBox="0 0 20 17"><path d="M10 4.500H15.500Q17 4.500 17 6V13Q17 14.500 15.500 14.500H5" fill="none" stroke="#1c1c1c" strokeWidth="1.400" /><path d="M18 7H20V12H18Z" fill="#1c1c1c" /><path d="M6 0Q8 4 8 7Q8 11 4.500 12Q1 13 .5 10Q0 6 6 0ZM1 15L5 10" fill="#1c1c1c" stroke="#1c1c1c" /></svg>
          <Gap $w={21} />
          <Stack $align="flex-end" $top={-2}><span>11:14</span><DateText>09-08-2025</DateText></Stack>
          <Gap $w={11} />
          <svg width="18" height="19" viewBox="0 0 18 19" fill="none" stroke="#1c1c1c" strokeWidth="1.400"><path d="M9 2Q3.500 2.500 3.500 8V11L1 14.500H16L14 11V9M6 15Q8.500 19 11 15M11.500 1.500H16L11.500 6H16M7 7H10.500L7 11H10.500" /></svg>
        </Tray>
      </Taskbar>
    </Screen>
  );
}
